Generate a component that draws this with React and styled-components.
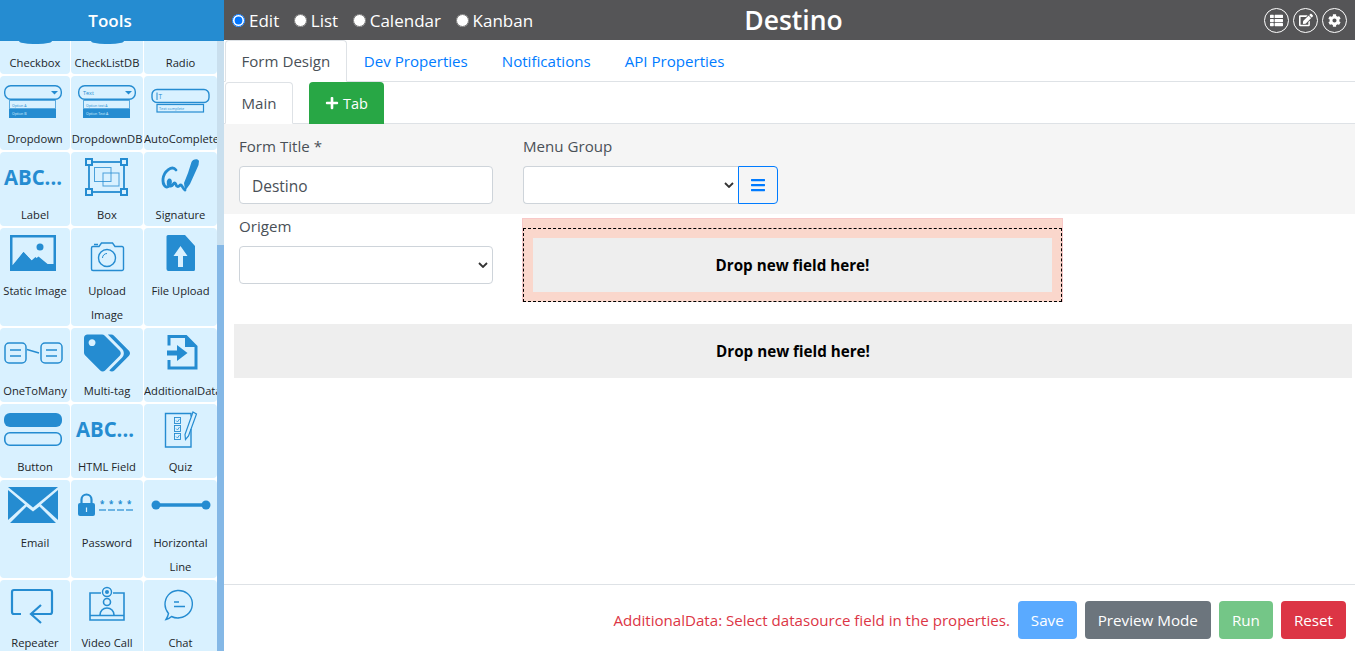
import React from 'react';
import styled, {createGlobalStyle} from 'styled-components';
import {FaBars, FaCog, FaEdit, FaPlus, FaTags, FaThList} from 'react-icons/fa';

const BLUE = '#258cd1';
const CHEVRON = "data:image/svg+xml,%3Csvg xmlns='http://www.w3.org/2000/svg' width='10' height='6'%3E%3Cpath d='M1 1l4 4 4-4' fill='none' stroke='%23333' stroke-width='1.8'/%3E%3C/svg%3E";

const DropdownGlyph = ({text, x = 4, optionA, optionB}) => (
    <Glyph>
        <rect x={x + 0.7} y="9.7" width="56.6" height="13.6" rx="6" fill="none" stroke={BLUE} strokeWidth="1.4"/>
        <path d={`M${x + 47} 15h7l-3.500 3.500z`} fill={BLUE}/>
        {text && <TinyText x={x + 5} y="18.500" size="5.500">{text}</TinyText>}
        <rect x={x + 5.500} y="24.500" width="46" height="8" fill="none" stroke={BLUE} strokeWidth="1" opacity="0.7"/>
        <TinyText x={x + 8} y="30.500" size="3.500">{optionA}</TinyText>
        <rect x={x + 5} y="33" width="47" height="9" fill={BLUE}/>
        <TinyText x={x + 8} y="39" size="3.500" fill="#d9f1ff">{optionB}</TinyText>
    </Glyph>
);

const AutoCompleteGlyph = () => (
    <Glyph>
        <rect x="6" y="13.500" width="57" height="13" rx="5" fill="none" stroke={BLUE} strokeWidth="1.400"/>
        <path d="M11 16.500v7.500" stroke={BLUE} strokeWidth="1"/>
        <TinyText x="12.500" y="23" size="6.500">T</TinyText>
        <rect x="11" y="28.500" width="46.500" height="7.500" fill="none" stroke={BLUE} strokeWidth="1.200"/>
        <TinyText x="13" y="34" size="3.800">Text complete</TinyText>
    </Glyph>
);

const AbcGlyph = () => (
    <Glyph>
        <AbcText x="4" y="33" textLength="58" lengthAdjust="spacingAndGlyphs">ABC...</AbcText>
    </Glyph>
);

const BoxGlyph = () => (
    <Glyph>
        <rect x="17" y="10" width="35" height="30" fill="none" stroke={BLUE} strokeWidth="1.800"/>
        <rect x="22.500" y="15.500" width="16.500" height="14" fill="none" stroke={BLUE} strokeWidth="1" opacity="0.8"/>
        <rect x="31" y="21" width="16" height="13" fill="none" stroke={BLUE} strokeWidth="1" opacity="0.8"/>
        {[[14, 7], [49, 7], [14, 37], [49, 37]].map(([x, y]) => (
            <rect key={`${x}-${y}`} x={x} y={y} width="6" height="6" fill="#d9f1ff" stroke={BLUE} strokeWidth="2"/>
        ))}
    </Glyph>
);

const SignatureGlyph = () => (
    <Glyph>
        <path d="M45.500 10c1-3 6.500-4 7.500-1l-.5 4-1.500 3.500-7 15.500-5 7-1-8 4-10z" fill={BLUE}/>
        <path d="M30 18c-4-5-12 1-13 9-.5 6 3 10 6 7 2-2 2-7 0-6-2 2-1 6 2 6 2.500 0 2-3.500 4-3 1.500 .5 .5 3 2.500 3.500 2 .5 2-2 3.500-1.500 1.500 1 2 4 4 5" fill="none" stroke={BLUE} strokeWidth="2.800" strokeLinecap="round"/>
    </Glyph>
);

const StaticImageGlyph = () => (
    <Glyph>
        <path fillRule="evenodd" d="M10 7h46v36H10zM12.500 9.500v27.800L23.500 24l8 8.500 4-3.500 7 7 11 0V9.500z" fill={BLUE}/>
        <path d="M12.500 38.500 23.500 24l9 9.500 6-5 14.500 12v.5H12.500z" fill={BLUE}/>
        <circle cx="40" cy="19" r="3.500" fill={BLUE}/>
    </Glyph>
);

const CameraGlyph = () => (
    <Glyph>
        <path d="M21 18.500h6l2.500-3.500h11l2.500 3.500h7a1.500 1.500 0 0 1 1.500 1.500v21a1.500 1.500 0 0 1-1.500 1.500h-29a1.500 1.500 0 0 1-1.500-1.500v-21a1.500 1.500 0 0 1 1.500-1.500z" fill="none" stroke={BLUE} strokeWidth="1.400"/>
        <circle cx="35" cy="30" r="8.500" fill="none" stroke={BLUE} strokeWidth="1.400"/>
        <path d="M30.500 30a4.500 4.500 0 0 1 4.500-4.500" fill="none" stroke={BLUE} strokeWidth="1"/>
        <path d="M22 16.500h4" stroke={BLUE} strokeWidth="1.400"/>
    </Glyph>
);

const FileUploadGlyph = () => (
    <Glyph>
        <path fillRule="evenodd" d="M22 7h17l10 11v23.500a1.500 1.500 0 0 1-1.500 1.500h-25a2 2 0 0 1-2-2V8.500A1.500 1.500 0 0 1 22 7zM34.500 18l-7 10h4.500v11h5V28h4.500z" fill={BLUE}/>
    </Glyph>
);

const OneToManyGlyph = () => (
    <Glyph>
        <rect x="5" y="15" width="21" height="20" rx="4" fill="none" stroke={BLUE} strokeWidth="1.500"/>
        <rect x="41" y="15" width="21" height="20" rx="4" fill="none" stroke={BLUE} strokeWidth="1.500"/>
        <path d="M10 22h11M10 28h11M46 22h11M46 28h11M27 21.500l12 3.500" stroke={BLUE} strokeWidth="1.500"/>
    </Glyph>
);

const AdditionalDataGlyph = () => (
    <Glyph>
        <path d="M23 17.500V8.500h17l10 10v21.500H23v-8" fill="none" stroke={BLUE} strokeWidth="3"/>
        <path d="M39 7.500l11.500 11.500H39z" fill={BLUE}/>
        <path d="M21 22.500h10V17l10.500 8-10.500 8v-5.500H21z" fill={BLUE}/>
    </Glyph>
);

const ButtonGlyph = () => (
    <Glyph>
        <rect x="4" y="9" width="58" height="14" rx="6" fill={BLUE}/>
        <rect x="4.800" y="28.800" width="56.400" height="12.400" rx="5" fill="none" stroke={BLUE} strokeWidth="1.600"/>
    </Glyph>
);

const QuizGlyph = () => (
    <Glyph>
        <path d="M45 25v18H19.500V9.500H45v3" fill="none" stroke={BLUE} strokeWidth="1.400"/>
        {[13.500, 21.500, 29.500].map ( ( y ) => (
            <React.Fragment key={y}>
                <rect x="28.500" y={y} width="6" height="6" fill="none" stroke={BLUE} strokeWidth="0.900"/>
                <path d={`M30 ${y + 3}l1.500 1.500 2-3`} fill="none" stroke={BLUE} strokeWidth="0.800"/>
            </React.Fragment>
        ) )}
        <path d="M47 8l3.500 2-8 22-3 3.500-.5-5z" fill="none" stroke={BLUE} strokeWidth="1.200"/>
    </Glyph>
);

const EmailGlyph = () => (
    <Glyph>
        <path d="M8 7h50L33 27.500z" fill={BLUE}/>
        <path d="M8 10v30l17-15.500zM58 10v30L41 24.500z" fill={BLUE}/>
        <path d="M10 43h46L39.500 26.500 33 31.500 26.500 26.500z" fill={BLUE}/>
    </Glyph>
);

const PasswordGlyph = () => (
    <Glyph>
        <path d="M9.500 23v-3.500a5 5 0 0 1 10 0V23" fill="none" stroke={BLUE} strokeWidth="2.200"/>
        <rect x="6" y="23" width="17" height="13" rx="2" fill={BLUE}/>
        <path d="M14.500 27.500v4.500" stroke="#d9f1ff" strokeWidth="1.200"/>
        {[27, 36, 45, 54].map ( ( x ) => (
            <React.Fragment key={x}>
                <TinyText x={x + 1} y="27" size="8" weight="700">*</TinyText>
                <path d={`M${x} 30h7`} stroke={BLUE} strokeWidth="1.200"/>
            </React.Fragment>
        ) )}
    </Glyph>
);

const LineGlyph = () => (
    <Glyph>
        <path d="M10 25h50" stroke={BLUE} strokeWidth="3.500"/>
        <circle cx="10" cy="25" r="4.500" fill={BLUE}/>
        <circle cx="60" cy="25" r="4.500" fill={BLUE}/>
    </Glyph>
);

const RepeaterGlyph = () => (
    <Glyph>
        <path d="M21 34h-7a2 2 0 0 1-2-2V12a2 2 0 0 1 2-2h36a2 2 0 0 1 2 2v20a2 2 0 0 1-2 2H31" fill="none" stroke={BLUE} strokeWidth="2.200"/>
        <path d="M41 25l-10 9 10 9" fill="none" stroke={BLUE} strokeWidth="2.200"/>
    </Glyph>
);

const VideoCallGlyph = () => (
    <Glyph>
        <path d="M29 13H18v27h34V13H41" fill="none" stroke={BLUE} strokeWidth="1.600"/>
        <path d="M18 35.500h34" stroke={BLUE} strokeWidth="1.600"/>
        <circle cx="35" cy="12" r="4.500" fill="none" stroke={BLUE} strokeWidth="1.400"/>
        <circle cx="35" cy="12" r="2" fill={BLUE}/>
        <circle cx="35" cy="22" r="3.500" fill="none" stroke={BLUE} strokeWidth="1.600"/>
        <path d="M28 35c0-4 3-7 7-7s7 3 7 7" fill="none" stroke={BLUE} strokeWidth="1.600"/>
    </Glyph>
);

const ChatGlyph = () => (
    <Glyph>
        <path d="M20 39.500c2.500-.5 4-1.500 5.500-3 2.500 1.200 5 1.800 8 1.300 8-1 13.500-7.500 12.800-15.300C45.500 15 39 10 31.500 10.500 24 11 19 17 19 24.500c0 3.500 1.500 6.500 3.500 9-.5 2.500-1.500 4.500-2.500 6z" fill="none" stroke={BLUE} strokeWidth="1.400"/>
        <path d="M28 22h5M28 26.500h11" stroke={BLUE} strokeWidth="1.300"/>
    </Glyph>
);

const CutGlyph = () => <CutBlob/>;

const TagsGlyph = () => (
    <IconBox>
        <FaTags size={46} color={BLUE}/>
    </IconBox>
);

const TOOLS = [
    {label: 'Checkbox', icon: <CutGlyph/>, cut: true},
    {label: 'CheckListDB', icon: <CutGlyph/>, cut: true},
    {label: 'Radio', cut: true},
    {label: 'Dropdown', icon: <DropdownGlyph optionA="Option A" optionB="Option B"/>},
    {label: 'DropdownDB', icon: <DropdownGlyph x={6} text="Text" optionA="Option text A" optionB="Option Text A"/>},
    {label: 'AutoComplete', icon: <AutoCompleteGlyph/>},
    {label: 'Label', icon: <AbcGlyph/>},
    {label: 'Box', icon: <BoxGlyph/>},
    {label: 'Signature', icon: <SignatureGlyph/>},
    {label: 'Static Image', icon: <StaticImageGlyph/>},
    {label: 'Upload Image', icon: <CameraGlyph/>, wrap: true},
    {label: 'File Upload', icon: <FileUploadGlyph/>},
    {label: 'OneToMany', icon: <OneToManyGlyph/>},
    {label: 'Multi-tag', icon: <TagsGlyph/>},
    {label: 'AdditionalData', icon: <AdditionalDataGlyph/>},
    {label: 'Button', icon: <ButtonGlyph/>},
    {label: 'HTML Field', icon: <AbcGlyph/>},
    {label: 'Quiz', icon: <QuizGlyph/>},
    {label: 'Email', icon: <EmailGlyph/>},
    {label: 'Password', icon: <PasswordGlyph/>},
    {label: 'Horizontal Line', icon: <LineGlyph/>, wrap: true},
    {label: 'Repeater', icon: <RepeaterGlyph/>},
    {label: 'Video Call', icon: <VideoCallGlyph/>},
    {label: 'Chat', icon: <ChatGlyph/>},
];

const VIEWS = ['Edit', 'List', 'Calendar', 'Kanban'];
const FORM_TABS = ['Dev Properties', 'Notifications', 'API Properties'];

const App = () => {
    return (
        <Page>
            <GlobalStyle/>
            <Sidebar>
                <SidebarTitle>Tools</SidebarTitle>
                <SidebarBody>
                    <ToolGrid>
                        {TOOLS.map ( ( tool ) => (
                            <Tool key={tool.label} $cut={tool.cut}>
                                {tool.icon}
                                <ToolLabel $wrap={tool.wrap}>{tool.label}</ToolLabel>
                            </Tool>
                        ) )}
                    </ToolGrid>
                    <ScrollTrack>
                        <ScrollThumb/>
                    </ScrollTrack>
                </SidebarBody>
            </Sidebar>

            <Main>
                <TopBar>
                    <Views>
                        {VIEWS.map ( ( view ) => (
                            <ViewOption key={view}>
                                <input type="radio" name="view" defaultChecked={view === 'Edit'}/>
                                {view}
                            </ViewOption>
                        ) )}
                    </Views>
                    <PageTitle>Destino</PageTitle>
                    <RoundButtons>
                        <RoundButton><FaThList size={13}/></RoundButton>
                        <RoundButton><FaEdit size={14}/></RoundButton>
                        <RoundButton><FaCog size={13}/></RoundButton>
                    </RoundButtons>
                </TopBar>

                <TabRow>
                    <ActiveTab $wide>Form Design</ActiveTab>
                    {FORM_TABS.map ( ( tab ) => <LinkTab key={tab}>{tab}</LinkTab> )}
                </TabRow>

                <TabRow>
                    <ActiveTab>Main</ActiveTab>
                    <AddTab><FaPlus size={14}/> Tab</AddTab>
                </TabRow>

                <TitlePanel>
                    <Field>
                        <FieldLabel>Form Title *</FieldLabel>
                        <TextInput defaultValue="Destino"/>
                    </Field>
                    <Field>
                        <FieldLabel>Menu Group</FieldLabel>
                        <InputGroup>
                            <GroupSelect><option></option></GroupSelect>
                            <BarsButton><FaBars size={16}/></BarsButton>
                        </InputGroup>
                    </Field>
                </TitlePanel>

                <FieldsRow>
                    <OrigemField>
                        <FieldLabel>Origem</FieldLabel>
                        <Select><option></option></Select>
                    </OrigemField>
                    <PinkSlot>
                        <DashedSlot>
                            <DropZone>Drop new field here!</DropZone>
                        </DashedSlot>
                    </PinkSlot>
                </FieldsRow>

                <WideDrop>
                    <DropZone>Drop new field here!</DropZone>
                </WideDrop>

                <Footer>
                    <ErrorText>AdditionalData: Select datasource field in the properties.</ErrorText>
                    <ActionButton $bg="#5aaaff">Save</ActionButton>
                    <ActionButton $bg="#6c757d">Preview Mode</ActionButton>
                    <ActionButton $bg="#74c687">Run</ActionButton>
                    <ActionButton $bg="#dc3545">Reset</ActionButton>
                </Footer>
            </Main>
        </Page>
    );
};

// ---------- styles ----------

const GlobalStyle = createGlobalStyle`
    html, body {
        margin: 0;
        height: 100%;
        overflow: hidden;
        background: #fff;
    }
    * {
        box-sizing: border-box;
    }
    body {
        font-family: "Open Sans", "Noto Sans", sans-serif;
        color: #212529;
    }
`;

const Page = styled.div`
    display: flex;
    height: 100vh;
`;

const Sidebar = styled.aside`
    width: 224px;
    flex: none;
    display: flex;
    flex-direction: column;
    overflow: hidden;
`;

const SidebarTitle = styled.div`
    height: 41px;
    flex: none;
    background: ${BLUE};
    color: #fff;
    font-size: 17px;
    font-weight: 600;
    line-height: 41px;
    text-align: center;
    padding-right: 4px;
`;

const SidebarBody = styled.div`
    flex: 1;
    min-height: 0;
    display: flex;
    overflow: hidden;
`;

const ToolGrid = styled.div`
    width: 217px;
    flex: none;
    display: grid;
    grid-template-columns: 70px 72px 73px;
    grid-auto-rows: max-content;
    column-gap: 1px;
    row-gap: 2px;
    align-content: start;
`;

const Tool = styled.div`
    background: #d9f1ff;
    border-radius: 4px;
    overflow: hidden;
    display: flex;
    flex-direction: column;
    align-items: center;
    ${ ( {$cut} ) => $cut && 'border-radius: 0 0 4px 4px; padding-top: 9px; height: 33px;' }
`;

const Glyph = styled.svg.attrs ( {viewBox: '0 0 70 50'} )`
    width: 70px;
    height: 50px;
    flex: none;
`;

const CutBlob = styled.div`
    width: 33px;
    height: 3px;
    flex: none;
    margin: -9px 0 6px;
    background: ${BLUE};
    border-radius: 0 0 14px 14px / 0 0 3px 3px;
`;

const IconBox = styled.div`
    width: 70px;
    height: 50px;
    flex: none;
    display: flex;
    align-items: center;
    justify-content: center;
`;

const TinyText = styled.text.attrs ( ( {size, weight, fill} ) => ( {
    fontSize: size,
    fontWeight: weight || 400,
    fill: fill || BLUE,
} ) )`
    font-family: "Open Sans", sans-serif;
`;

const AbcText = styled.text`
    font-family: "Open Sans", sans-serif;
    font-size: 21px;
    font-weight: 700;
    fill: ${BLUE};
`;

const ToolLabel = styled.div`
    width: 100%;
    font-size: 11.200px;
    line-height: 24px;
    margin: 1px 0 -1px;
    text-align: center;
    color: #212529;
    white-space: ${ ( {$wrap} ) => ( $wrap ? 'normal' : 'nowrap' )};
`;

const ScrollTrack = styled.div`
    width: 7px;
    flex: none;
    background: #c9dfee;
    padding-top: 204px;
`;

const ScrollThumb = styled.div`
    height: 100%;
    background: #85b8e6;
`;

const Main = styled.main`
    flex: 1;
    min-width: 0;
    display: flex;
    flex-direction: column;
`;

const TopBar = styled.header`
    height: 40px;
    flex: none;
    background: #555557;
    color: #fff;
    display: grid;
    grid-template-columns: 1fr auto 1fr;
    align-items: center;
    padding: 0 8px;
`;

const Views = styled.div`
    display: flex;
    gap: 14.600px;
`;

const ViewOption = styled.label`
    display: flex;
    align-items: center;
    gap: 4px;
    font-size: 17px;

    input {
        margin: 0;
        width: 13px;
        height: 13px;
    }
`;

const PageTitle = styled.div`
    font-size: 26.500px;
    font-weight: 600;
    margin-left: 8px;
`;

const RoundButtons = styled.div`
    display: flex;
    justify-content: flex-end;
    gap: 4px;
`;

const RoundButton = styled.div`
    width: 25px;
    height: 25px;
    border: 1px solid #fff;
    border-radius: 50%;
    display: flex;
    align-items: center;
    justify-content: center;
`;

const TabRow = styled.nav`
    height: 42px;
    flex: none;
    display: flex;
    align-items: stretch;
    border-bottom: 1px solid #dee2e6;
    padding-left: 1px;
`;

const ActiveTab = styled.div`
    background: #fff;
    border: 1px solid #dee2e6;
    border-bottom-color: #fff;
    border-radius: 4px 4px 0 0;
    color: #495057;
    font-size: 15.100px;
    padding: 0 15.500px;
    line-height: 40px;
    margin-bottom: -1px;
    ${ ( {$wide} ) => !$wide && 'margin-right: 16px;' }
`;

const LinkTab = styled.a`
    color: #007bff;
    font-size: 15.100px;
    line-height: 42px;
    padding: 0 17px;
`;

const AddTab = styled.div`
    width: 75px;
    background: #28a745;
    color: #fff;
    border-radius: 4px 4px 0 0;
    font-size: 14.500px;
    display: flex;
    align-items: center;
    justify-content: center;
    gap: 4px;
    margin-bottom: -1px;
`;

const TitlePanel = styled.section`
    height: 90px;
    flex: none;
    background: #f5f5f5;
    display: flex;
    gap: 30px;
    padding: 12px 0 0 15px;
`;

const Field = styled.div`
    width: 254px;
`;

const FieldLabel = styled.div`
    color: #495057;
    font-size: 15.100px;
    line-height: 21px;
    margin-bottom: 9px;
`;

const TextInput = styled.input`
    display: block;
    width: 100%;
    height: 38px;
    border: 1px solid #ced4da;
    border-radius: 4px;
    background: #fff;
    padding: 1px 12px 0;
    color: #495057;
    font: inherit;
    font-size: 15.500px;
`;

const Select = styled.select`
    display: block;
    width: 100%;
    height: 38px;
    border: 1px solid #ced4da;
    border-radius: 4px;
    appearance: none;
    background: #fff url("${CHEVRON}") no-repeat right 4px center;
`;

const InputGroup = styled.div`
    display: flex;
    width: 255px;
`;

const GroupSelect = styled(Select)`
    flex: 1;
    width: auto;
    min-width: 0;
    border-right: none;
    border-radius: 4px 0 0 4px;
`;

const BarsButton = styled.div`
    width: 40px;
    height: 38px;
    flex: none;
    border: 1px solid #007bff;
    border-radius: 0 4px 4px 0;
    color: #007bff;
    display: flex;
    align-items: center;
    justify-content: center;
`;

const FieldsRow = styled.section`
    display: flex;
    align-items: flex-start;
    padding: 4px 0 0 15px;
    gap: 29px;
`;

const OrigemField = styled(Field)`
    margin-top: -2px;
`;

const PinkSlot = styled.div`
    width: 541px;
    height: 84px;
    background: #fad7cc;
    border: 1px solid #f8c8c8;
    border-bottom: none;
    padding-top: 9px;
`;

const DashedSlot = styled.div`
    height: 74px;
    border: 1px dashed #000;
    padding: 9px;
`;

const DropZone = styled.div`
    height: 54px;
    background: #eeeeee;
    color: #000;
    font-size: 15.200px;
    font-weight: 700;
    display: flex;
    align-items: center;
    justify-content: center;
`;

const WideDrop = styled.div`
    margin: 22px 3px 0 10px;
`;

const Footer = styled.footer`
    margin-top: auto;
    height: 67px;
    flex: none;
    border-top: 1px solid #dee2e6;
    display: flex;
    justify-content: flex-end;
    align-items: flex-start;
    gap: 8px;
    padding: 16px 9px 0 0;
`;

const ErrorText = styled.div`
    color: #dc3545;
    font-size: 15.100px;
    line-height: 38px;
`;

const ActionButton = styled.div`
    background: ${ ( {$bg} ) => $bg};
    color: #fff;
    height: 38px;
    padding: 0 13px;
    border-radius: 4px;
    font-size: 15.200px;
    line-height: 38px;
`;

export default App;
